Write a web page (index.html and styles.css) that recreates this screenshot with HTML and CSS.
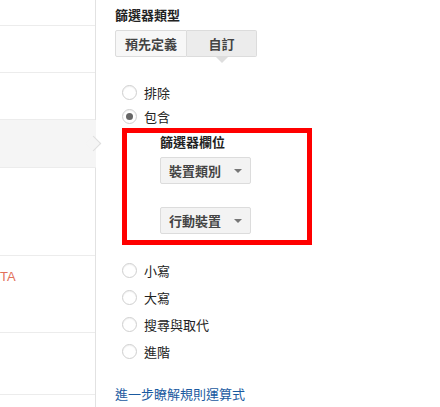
FILE: index.html
```html
<!DOCTYPE html>
<html lang="zh-Hant">
<head>
<meta charset="utf-8">
<link rel="stylesheet" href="styles.css">
</head>
<body>
<div class="page">
  <div class="side">
    <div class="row r1"></div>
    <div class="row r2"></div>
    <div class="row r3"></div>
    <div class="row r4 active"></div>
    <div class="row r5"></div>
    <div class="row r6"><span class="beta">TA</span></div>
    <div class="row r7"></div>
    <div class="row r8"></div>
  </div>
  <div class="panel">
    <div class="title">篩選器類型</div>
    <div class="seg">
      <div class="seg-btn">預先定義</div>
      <div class="seg-btn selected">自訂</div>
    </div>
    <div class="options">
      <div class="opt"><span class="radio"></span><span>排除</span></div>
      <div class="opt"><span class="radio checked"></span><span>包含</span></div>
    </div>
    <div class="box">
      <div class="field-title">篩選器欄位</div>
      <div class="dropdown"><span>裝置類別</span><span class="caret"></span></div>
      <div class="dropdown second"><span>行動裝置</span><span class="caret"></span></div>
    </div>
    <div class="options lower">
      <div class="opt tall"><span class="radio"></span><span>小寫</span></div>
      <div class="opt tall"><span class="radio"></span><span>大寫</span></div>
      <div class="opt tall"><span class="radio"></span><span>搜尋與取代</span></div>
      <div class="opt tall"><span class="radio"></span><span>進階</span></div>
    </div>
    <a class="learn" href="#">進一步瞭解規則運算式</a>
  </div>
</div>
</body>
</html>
```

FILE: styles.css
```css
* { box-sizing: border-box; }
html, body {
  margin: 0;
  padding: 0;
  background: #fff;
  width: 440px;
  height: 407px;
  overflow: hidden;
}
body {
  font-family: "Noto Sans CJK TC", "Liberation Sans", sans-serif;
  font-size: 13px;
  color: #222;
}
.page {
  display: flex;
  height: 407px;
}
.side {
  width: 96px;
  flex: none;
  border-right: 1px solid #e2e2e2;
  display: flex;
  flex-direction: column;
}
.row {
  position: relative;
  border-bottom: 1px solid #ececec;
  flex: none;
}
.r1 { height: 26px; }
.r2 { height: 47px; }
.r3 { height: 47px; }
.r4 { height: 48px; }
.r5 { height: 88px; }
.r6 { height: 77px; padding-top: 13px; }
.r7 { height: 62px; }
.r8 { flex: 1; border-bottom: none; }
.active {
  background: #f5f5f5;
  margin-right: -1px;
}
.active::after {
  content: "";
  position: absolute;
  right: -3px;
  top: 18px;
  width: 10px;
  height: 10px;
  background: #f5f5f5;
  border-top: 1px solid #dedede;
  border-right: 1px solid #dedede;
  transform: rotate(45deg);
}
.beta {
  font-family: "Liberation Sans", sans-serif;
  font-size: 13px;
  line-height: 16px;
  color: #e2705a;
  display: block;
}
.panel {
  padding: 6px 0 0 19px;
  flex: 1;
}
.title {
  font-weight: bold;
  line-height: 18px;
  color: #222;
}
.seg {
  display: flex;
  margin-top: 6px;
  height: 27px;
}
.seg-btn {
  position: relative;
  height: 27px;
  line-height: 25px;
  font-weight: bold;
  color: #444;
  text-align: center;
  border: 1px solid #dcdcdc;
  background: #f7f7f7;
  width: 72px;
  border-radius: 2px 0 0 2px;
}
.seg-btn.selected {
  width: 70px;
  background: #ececec;
  border-left: none;
  border-radius: 0 2px 2px 0;
}
.seg-btn.selected::after {
  content: "";
  position: absolute;
  left: 50%;
  margin-left: -6px;
  top: 26px;
  border-left: 6px solid transparent;
  border-right: 6px solid transparent;
  border-top: 6px solid #dedede;
}
.options { margin-top: 23px; }
.opt {
  display: flex;
  align-items: center;
  height: 24px;
  padding-left: 7px;
  gap: 7px;
}
.opt.tall { height: 27px; }
.radio {
  width: 15px;
  height: 15px;
  border-radius: 50%;
  border: 1px solid #cfcfcf;
  background: #fff;
  box-shadow: inset 0 1px 1px rgba(0,0,0,0.06);
  position: relative;
  flex: none;
}
.radio.checked::after {
  content: "";
  position: absolute;
  left: 3px;
  top: 3px;
  width: 7px;
  height: 7px;
  border-radius: 50%;
  background: #666;
}
.box {
  margin-left: 7px;
  width: 190px;
  height: 117px;
  border: 5px solid #ff0000;
  padding-left: 33px;
}
.field-title {
  font-weight: bold;
  line-height: 17px;
}
.dropdown {
  margin-top: 7px;
  width: 91px;
  height: 27px;
  border: 1px solid #dcdcdc;
  border-radius: 2px;
  background: #f3f3f3;
  display: flex;
  align-items: center;
  padding-left: 8px;
  font-weight: bold;
  color: #444;
}
.dropdown.second { margin-top: 23px; }
.caret {
  margin-left: auto;
  margin-right: 8px;
  border-left: 4px solid transparent;
  border-right: 4px solid transparent;
  border-top: 4px solid #777;
}
.lower { margin-top: 12px; }
.learn {
  display: block;
  margin-top: 20px;
  line-height: 18px;
  color: #1a5aa0;
  text-decoration: none;
}
```
